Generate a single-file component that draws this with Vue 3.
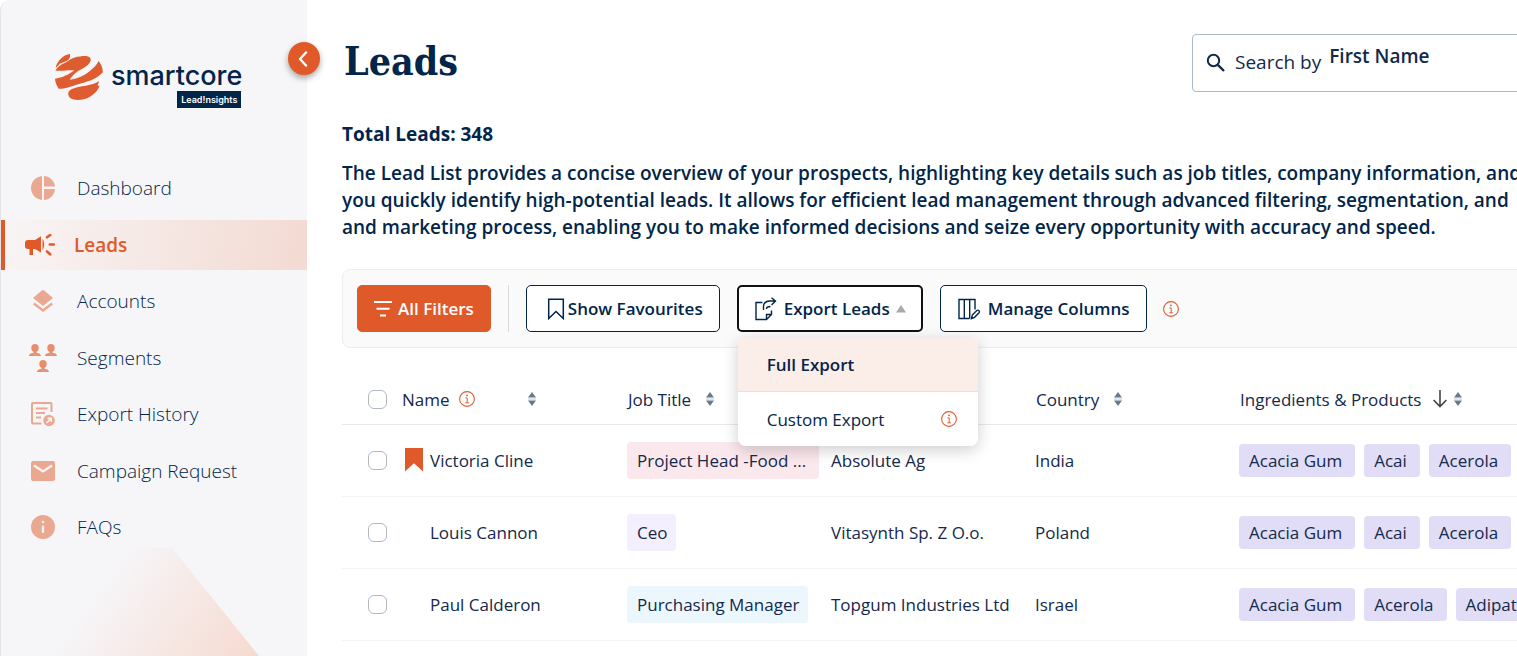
<script setup>
import { ref } from 'vue'

const nav = [
  { label: 'Dashboard', icon: 'pie' },
  { label: 'Leads', icon: 'horn', active: true },
  { label: 'Accounts', icon: 'layers' },
  { label: 'Segments', icon: 'people' },
  { label: 'Export History', icon: 'history' },
  { label: 'Campaign Request', icon: 'mail' },
  { label: 'FAQs', icon: 'faq' },
]

const intro = [
  'The Lead List provides a concise overview of your prospects, highlighting key details such as job titles, company information, and',
  'you quickly identify high-potential leads. It allows for efficient lead management through advanced filtering, segmentation, and',
  'and marketing process, enabling you to make informed decisions and seize every opportunity with accuracy and speed.',
]

const leads = ref([
  { name: 'Victoria Cline', fav: true, title: 'Project Head -Food ...', tone: 'pink', company: 'Absolute Ag', country: 'India', tags: ['Acacia Gum', 'Acai', 'Acerola'] },
  { name: 'Louis Cannon', fav: false, title: 'Ceo', tone: 'violet', company: 'Vitasynth Sp. Z O.o.', country: 'Poland', tags: ['Acacia Gum', 'Acai', 'Acerola'] },
  { name: 'Paul Calderon', fav: false, title: 'Purchasing Manager', tone: 'blue', company: 'Topgum Industries Ltd', country: 'Israel', tags: ['Acacia Gum', 'Acerola', 'Adipate'] },
])
</script>

<template>
  <div class="app">
    <svg class="defs" aria-hidden="true">
      <symbol id="i-info" viewBox="0 0 16 16">
        <circle cx="8" cy="8" r="7.4" fill="none" stroke="#e05c2c" stroke-width="1.1" />
        <circle cx="8" cy="4.4" r=".9" fill="#e05c2c" />
        <path d="M6.4 6.9h1.8v4.8M6.3 11.8h3.6" fill="none" stroke="#e05c2c" />
      </symbol>
      <symbol id="i-sort" viewBox="0 0 8 14">
        <path d="M4 0 8 5.4H0zM4 14 0 8.6h8z" fill="#647b90" />
        <path d="M0 7h8" stroke="#c3ccd4" />
      </symbol>
    </svg>

    <aside class="sidebar">
      <div class="brand">
        <svg class="mark" viewBox="12 10 148 142" aria-hidden="true">
          <g fill="#df5c30">
            <path d="M17 54C20 34 42 14 59 13C62 26 54 33 44 36L30 42Z" />
            <path d="M16 62C28 46 38 42 52 34C64 26 78 20 90 20C112 17 124 22 120 34C115 48 98 56 86 62C72 70 66 80 60 87C85 84 105 74 118 62C105 78 84 88 64 90C88 86 132 60 144 34C152 44 158 58 156 68C140 86 120 92 100 98C75 104 50 116 26 116C20 106 15 96 15 86C36 84 58 72 72 61C55 60 32 64 16 62Z" />
            <path d="M54 130C56 116 78 112 100 108C120 104 138 100 146 92L141 106L147 108C140 126 118 148 86 149C68 150 54 144 54 130Z" />
          </g>
          <path d="M60 88C85 84 105 74 119 61" fill="none" stroke="#f6f6f9" stroke-width="2.500" />
          <path d="M28 43C42 40 50 36 58 29" fill="none" stroke="#f6f6f9" stroke-width="2" />
        </svg>
        <div class="words">
          <span class="word">smartcore</span>
          <span class="sub">Lead!nsights</span>
        </div>
      </div>
      <button class="collapse" aria-label="Collapse menu">
        <svg width="10" height="16" viewBox="0 0 10 16"><path d="M8 1.5 2 8l6 6.500" fill="none" stroke="#fff" stroke-width="2.400" stroke-linecap="round" stroke-linejoin="round" /></svg>
      </button>

      <nav>
        <a v-for="n in nav" :key="n.label" href="#" :class="{ active: n.active }">
          <span class="ico">
            <svg v-if="n.icon === 'pie'" width="24" height="26" viewBox="0 0 24 26" fill="#eba891">
              <path d="M11 1v24C5 24.500 0 19.500 0 13S5 1.500 11 1zM13 1c6 .5 10.500 5 11 10.500H13zM13 14h11c-.5 6-5 10.500-11 11z" />
            </svg>
            <svg v-else-if="n.icon === 'horn'" width="30" height="24" viewBox="0 0 30 24">
              <path d="M3 7h7l6-3.800V19.500L10 16H8v6H4.500v-6H3c-2 0-3-1-3-2.500V10c0-2 1-3 3-3zM17.500 6c2.300 2.500 2.300 8.500 0 11z" fill="#e05a29" />
              <path d="M22 4.300 25.200 2M24.800 11.500h4M22 18.500l3.200 2.800" fill="none" stroke="#e05a29" stroke-width="2.600" stroke-linecap="round" />
            </svg>
            <svg v-else-if="n.icon === 'layers'" width="20" height="24" viewBox="0 0 20 24">
              <path d="M8.800 1.500Q10 .6 11.200 1.500L20 9l-8.800 7Q10 17 8.800 16L0 9z" fill="#eba891" />
              <path d="M.8 14.500 10 21.500l9.200-7" fill="none" stroke="#eba891" stroke-width="2.400" />
            </svg>
            <svg v-else-if="n.icon === 'people'" width="28" height="28" viewBox="0 0 28 28" fill="#e98d6c">
              <g v-for="p in [[0, 0], [16, 0], [8, 16]]" :key="p.join()" :transform="`translate(${p[0]} ${p[1]})`">
                <ellipse cx="6" cy="4" rx="3.700" ry="4" />
                <path d="M0 12c0-2 2-2.700 4.500-3.200L6 11l1.500-2.200C10 9.300 12 10 12 12z" />
                <path d="M4.500 6h3v3.500L6 10.500l-1.500-1z" />
              </g>
            </svg>
            <svg v-else-if="n.icon === 'history'" width="24" height="26" viewBox="0 0 24 26">
              <path d="M20.500 11V3Q20.500 2 19.500 2H2Q1 2 1 3v18.500Q1 22.500 2 22.500h8.500" fill="none" stroke="#eba891" stroke-width="2" />
              <path d="M5 7.500h11.500M5 12h9M5 16.500h5" stroke="#eba891" stroke-width="2.200" />
              <circle cx="18" cy="19.500" r="5.800" fill="#eba891" />
              <path d="m15.500 22 4.500-4.500M16.500 17.200h3.800V21" fill="none" stroke="#f6f6f9" stroke-width="1.500" />
            </svg>
            <svg v-else-if="n.icon === 'mail'" width="24" height="20" viewBox="0 0 24 20">
              <rect width="24" height="20" rx="2.200" fill="#eba891" />
              <path d="m3 4.500 9 6 9-6" fill="none" stroke="#f6f6f9" stroke-width="2.200" />
            </svg>
            <svg v-else width="24" height="24" viewBox="0 0 24 24">
              <circle cx="12" cy="12" r="12" fill="#eba891" />
              <path d="M12 7h.01M12 11.800v5" stroke="#f8f2f2" stroke-width="2.400" stroke-linecap="round" />
            </svg>
          </span>
          {{ n.label }}
        </a>
      </nav>
      <div class="wedge"></div>
    </aside>

    <main>
      <div class="sheet">
        <header>
          <h1>Leads</h1>
          <label class="search">
            <svg width="20" height="20" viewBox="0 0 20 20"><circle cx="7.500" cy="7.500" r="5.700" fill="none" stroke="#12294a" stroke-width="2" /><path d="m11.800 11.800 6.200 6.200" stroke="#12294a" stroke-width="2.400" /></svg>
            <span>Search by</span>
            <strong>First Name</strong>
            <input type="text" />
          </label>
        </header>

        <p class="total">Total Leads: 348</p>
        <p class="intro"><span v-for="line in intro" :key="line">{{ line }}</span></p>

        <div class="toolbar">
          <button class="btn primary">
            <svg width="18" height="18" viewBox="0 0 18 18"><path d="M0 2h18M2.500 8.800h13M6 15.500h6" stroke="#fff" stroke-width="2" /></svg>
            All Filters
          </button>
          <i class="rule"></i>
          <button class="btn fav">
            <svg width="18" height="24" viewBox="0 0 18 24"><path d="M1.700 2.200h14.600v19.300L9 14.500l-7.300 7z" fill="none" stroke="#02254a" stroke-width="1.500" /></svg>
            Show Favourites
          </button>
          <div class="export">
            <button class="btn open">
              <svg width="24" height="24" viewBox="0 0 24 24" fill="none" stroke="#02254a" stroke-width="1.400">
                <path d="M8.500 5.500H2v17h10.500l5-5V13.500M12.500 22.500v-5h5M9.500 13V9.500q0-5 6-5.500H21M17.500 .8 21.500 4l-4 4M16.500 9.500q-4 0-4 2.500" />
              </svg>
              Export Leads
              <svg class="caret" width="10" height="8" viewBox="0 0 10 8"><path d="M5 0 10 7.500H0z" fill="#a8a9ad" /></svg>
            </button>
            <div class="menu">
              <button class="hot">Full Export</button>
              <button>Custom Export <svg width="16" height="16"><use href="#i-info" /></svg></button>
            </div>
          </div>
          <button class="btn manage">
            <svg width="24" height="24" viewBox="0 0 24 24" fill="none" stroke="#02254a" stroke-width="1.400">
              <path d="M12.500 21.500H2V2.500h16v10M7.300 2.500v19M12.700 2.500v19M14.500 21.500l.8-3.500 4.500-4.500q1.200-.8 2.200 .2t.1 2.100L17.500 20.300z" />
            </svg>
            Manage Columns
          </button>
          <svg class="tip" width="16" height="16"><use href="#i-info" /></svg>
        </div>

        <table>
          <colgroup><col class="c-check" /><col class="c-name" /><col class="c-mid" /><col class="c-mid" /><col class="c-mid" /><col /></colgroup>
          <thead>
            <tr>
              <th><input type="checkbox" aria-label="Select all" /></th>
              <th><div class="th name"><span>Name</span><svg class="inf" width="16" height="16"><use href="#i-info" /></svg><svg class="sort" width="8" height="14"><use href="#i-sort" /></svg></div></th>
              <th><div class="th">Job Title<svg class="sort" width="8" height="14"><use href="#i-sort" /></svg></div></th>
              <th></th>
              <th><div class="th">Country<svg class="sort" width="8" height="14"><use href="#i-sort" /></svg></div></th>
              <th>
                <div class="th">Ingredients &amp; Products
                  <svg class="down" width="14" height="18" viewBox="0 0 14 18"><path d="M7 0v16.500M.6 10 7 16.600 13.400 10" fill="none" stroke="#444" stroke-width="1.600" /></svg>
                  <svg width="8" height="14"><use href="#i-sort" /></svg>
                </div>
              </th>
            </tr>
          </thead>
          <tbody>
            <tr v-for="l in leads" :key="l.name">
              <td><input type="checkbox" :aria-label="`Select ${l.name}`" /></td>
              <td>
                <div class="person">
                  <span class="flag"><svg v-if="l.fav" width="18" height="24" viewBox="0 0 18 24"><path d="M0 0h18v23.500l-9-8.200-9 8.200z" fill="#e05a29" /></svg></span>
                  {{ l.name }}
                </div>
              </td>
              <td><span class="chip" :class="l.tone">{{ l.title }}</span></td>
              <td>{{ l.company }}</td>
              <td>{{ l.country }}</td>
              <td><div class="tags"><span v-for="t in l.tags" :key="t">{{ t }}</span></div></td>
            </tr>
          </tbody>
        </table>
      </div>
    </main>
  </div>
</template>

<style>
body { margin: 0; background: #fff; overflow: hidden; }
</style>

<style scoped>
* { box-sizing: border-box; }
.app { display: flex; min-height: 100vh; font-family: "Open Sans", "Noto Sans", sans-serif; color: #02254a; font-size: 17px; }
.defs { position: absolute; width: 0; height: 0; }
svg { flex: none; display: block; }
button { font: inherit; color: inherit; cursor: pointer; }

.sidebar { position: relative; flex: none; width: 307px; background: #f6f6f9; border-left: 1px solid #e4e4e8; border-top-left-radius: 10px; }
.brand { display: flex; padding: 53px 0 0 53px; height: 163px; }
.mark { width: 50px; height: 48px; }
.words { display: flex; flex-direction: column; align-items: flex-end; margin-left: 7px; padding-top: 8px; }
.word { font: 500 27px/30px Inter, sans-serif; color: #02254a; }
.sub { background: #02254a; color: #fff; font: 600 9px/17px Inter, sans-serif; padding: 0 4px; margin-right: 1px; }
.collapse { position: absolute; right: -13px; top: 42px; width: 32px; height: 33px; border: 0; border-radius: 50%; padding: 0 3px 0 0; background: #e05a29; display: flex; align-items: center; justify-content: center; box-shadow: 0 3px 6px rgba(0, 0, 0, .35); }
nav { display: flex; flex-direction: column; justify-content: space-between; height: 389px; }
nav a { display: flex; align-items: center; height: 50px; font-size: 19px; font-weight: 300; color: #02254a; text-decoration: none; }
.ico { width: 28px; margin: 0 20px 0 28px; display: flex; justify-content: center; }
nav a.active { border-left: 4px solid #e05a29; color: #e05a29; font-weight: 600; background: linear-gradient(100deg, #f8f5f5, #f3dad2); }
nav a.active .ico { margin: 0 20px 0 21px; }
.wedge { position: absolute; left: 0; right: 0; bottom: 0; height: 108px; clip-path: polygon(0 0, 171px 0, 258px 100%, 0 100%); background: linear-gradient(126deg, #f6dad000 32%, #f6dad0 88%); }

main { flex: 1; min-width: 0; overflow: hidden; }
.sheet { width: calc(100% + 300px); padding: 34px 35px 0; }
header { display: flex; justify-content: space-between; height: 58px; }
h1 { margin: 0 0 0 2px; font: bold 39px/54px "DejaVu Serif Condensed", "DejaVu Serif", serif; }
.search { width: 590px; border: 1px solid #a9bcc6; border-radius: 4px; display: flex; align-items: center; padding: 0 13px; font-size: 19px; color: #12294a; }
.search span { margin: 0 8px 0 9px; padding-bottom: 2px; }
.search strong { font-weight: 600; padding-bottom: 15px; }
.search input { flex: 1; min-width: 0; border: 0; outline: 0; background: none; font: inherit; }
.total { margin: 29px 0 0; font-size: 19px; line-height: 27px; font-weight: 700; }
.intro { margin: 12px 0 0; font-size: 19px; line-height: 27px; font-weight: 600; white-space: nowrap; }
.intro span { display: block; }

.toolbar { display: flex; align-items: center; margin-top: 28px; padding: 15px 14px; border: 1px solid #e9eeee; border-radius: 8px; background: #fafafa; }
.btn { display: flex; align-items: center; height: 47px; border: 1px solid #02254a; border-radius: 5px; background: #fff; font-weight: 600; padding: 0 16px; white-space: nowrap; }
.primary { background: #e05a29; border-color: #e05a29; color: #fff; gap: 6px; }
.rule { width: 1px; align-self: stretch; background: #d9d9dc; margin: 0 17px; }
.fav { gap: 3px; padding-left: 20px; }
.export { position: relative; margin: 0 17px; }
.open { border: 2px solid #111; gap: 6px; padding: 0 15px; }
.manage { gap: 7px; padding-left: 16px; }
.tip { margin-left: 16px; }
.menu { position: absolute; z-index: 2; top: 53px; left: 1px; width: 240px; border-radius: 4px 4px 8px 8px; overflow: hidden; background: #fff; box-shadow: 0 4px 16px rgba(0, 0, 0, .2); }
.menu button { display: flex; width: 100%; height: 54px; align-items: center; justify-content: space-between; border: 0; background: #fff; padding: 0 21px 0 29px; }
.menu .hot { background: #fbeee9; border-bottom: 1px solid #ecdfdb; font-weight: 600; }

table { width: 100%; table-layout: fixed; border-collapse: collapse; margin-top: 27px; }
.c-check { width: 59px; }
.c-name { width: 226px; }
.c-mid { width: 204px; }
th, td { padding: 0; text-align: left; font-weight: 400; white-space: nowrap; color: #14294b; }
th { height: 49px; border-bottom: 1px solid #e9e9ec; }
td { height: 72px; border-bottom: 1px solid #f4f4f6; }
input[type="checkbox"] { appearance: none; display: block; width: 19px; height: 19px; margin: 0 0 0 26px; border: 1px solid #b0b8c4; border-radius: 6px; background: #fff; }
.th { display: flex; align-items: center; padding-left: 1px; }
.th .sort { margin-left: 15px; }
.th .inf { margin-left: 9px; }
.th.name .sort { margin-left: 53px; }
.down { margin: 0 7px 0 12px; }
.person { display: flex; align-items: center; }
.flag { width: 25px; margin-left: 4px; }
.chip { display: inline-block; padding: 0 9px 0 10px; line-height: 37px; border-radius: 4px; }
.pink { background: #fbe8ec; padding-right: 13px; }
.violet { background: #f4effe; }
.blue { background: #ebf7fd; }
.tags { display: flex; gap: 9px; }
.tags span { padding: 0 13px 0 10px; line-height: 33px; border-radius: 4px; background: #e1ddf6; }
</style>
